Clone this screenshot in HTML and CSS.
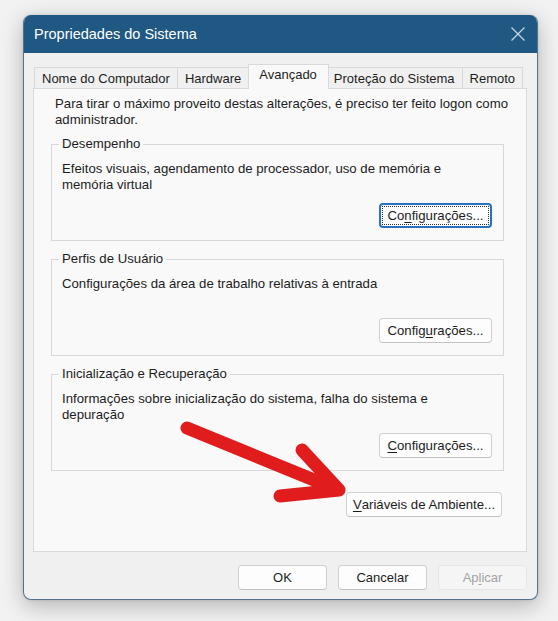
FILE: index.html
```html
<!DOCTYPE html>
<html lang="pt">
<head>
<meta charset="utf-8">
<title>Propriedades do Sistema</title>
<link rel="stylesheet" href="styles.css">
</head>
<body>
<div class="window">
  <div class="titlebar">
    <span class="title">Propriedades do Sistema</span>
    <svg class="close" viewBox="0 0 14 14" aria-hidden="true"><path d="M0.5 0.5L13.5 13.5M13.5 0.5L0.5 13.5"/></svg>
  </div>
  <div class="client">
    <div class="tabs">
      <div class="tab">Nome do Computador</div>
      <div class="tab">Hardware</div>
      <div class="tab active">Avançado</div>
      <div class="tab">Proteção do Sistema</div>
      <div class="tab">Remoto</div>
    </div>
    <div class="panel">
      <p class="intro">Para tirar o máximo proveito destas alterações, é preciso ter feito logon como<br>administrador.</p>
      <fieldset class="group">
        <legend>Desempenho</legend>
        <p class="desc">Efeitos visuais, agendamento de processador, uso de memória e<br>memória virtual</p>
        <div class="actions"><button class="btn cfg focused"><span class="focus">Co<u>n</u>figurações...</span></button></div>
      </fieldset>
      <fieldset class="group">
        <legend>Perfis de Usuário</legend>
        <p class="desc">Configurações da área de trabalho relativas à entrada</p>
        <div class="actions"><button class="btn cfg">Config<u>u</u>rações...</button></div>
      </fieldset>
      <fieldset class="group">
        <legend>Inicialização e Recuperação</legend>
        <p class="desc">Informações sobre inicialização do sistema, falha do sistema e<br>depuração</p>
        <div class="actions"><button class="btn cfg"><u>C</u>onfigurações...</button></div>
      </fieldset>
      <div class="env"><button class="btn envbtn"><u>V</u>ariáveis de Ambiente...</button></div>
    </div>
    <div class="footer">
      <button class="btn dlg">OK</button>
      <button class="btn dlg">Cancelar</button>
      <button class="btn dlg disabled">Ap<u>l</u>icar</button>
    </div>
  </div>
</div>
<svg class="annot" viewBox="0 0 558 621" width="558" height="621" aria-hidden="true">
  <g fill="none" stroke="#e11c1c" stroke-width="13" stroke-linecap="round" stroke-linejoin="round">
    <path d="M187 428 L336 489"/>
    <path d="M302 450 L339 490 L280 496"/>
  </g>
</svg>
</body>
</html>
```
FILE: styles.css
```css
* { box-sizing: border-box; }
html, body { margin: 0; }
body {
  position: relative;
  width: 558px;
  height: 621px;
  overflow: hidden;
  background: #f2f2f2;
  font-family: "Liberation Sans", Arial, sans-serif;
  font-size: 13.2px;
  line-height: 16px;
  color: #1c1c1c;
}
.window {
  margin: 15px 0 0 23px;
  width: 515px;
  height: 585px;
  border: 1px solid #56718a;
  border-top: 0;
  border-radius: 8px;
  overflow: hidden;
  background: #f0f0f0;
  box-shadow: 0 6px 22px rgba(0,0,0,0.26), 0 0 3px rgba(0,0,0,0.12);
  display: flex;
  flex-direction: column;
}
.titlebar {
  flex: none;
  height: 38px;
  background: #1f5882;
  display: flex;
  align-items: center;
  justify-content: space-between;
  padding: 0 12px 0 10px;
}
.title { color: #ffffff; font-size: 14.5px; }
.close { width: 14px; height: 14px; stroke: #cdd6de; stroke-width: 1.2; fill: none; }
.client {
  flex: 1;
  display: flex;
  flex-direction: column;
  padding: 11px 10px 9px 9px;
}
.tabs {
  display: flex;
  align-items: flex-end;
  height: 25px;
  margin: 0 0 -1px 1px;
  position: relative;
  z-index: 1;
}
.tab {
  height: 21px;
  margin-bottom: 1px;
  padding: 0 7px;
  border: 1px solid #d9d9d9;
  border-bottom: 0;
  background: #f0f0f0;
  font-size: 13px;
  line-height: 21px;
  white-space: nowrap;
}
.tab + .tab { margin-left: -1px; }
.tab.active {
  height: 25px;
  margin: 0 -2px 0 -1px;
  padding: 0 11px 0 10px;
  background: #f9f9f9;
  line-height: 20px;
  position: relative;
  z-index: 1;
}
.panel {
  flex: none;
  height: 464px;
  border: 1px solid #d9d9d9;
  background: #f9f9f9;
  padding: 7px 22px 0 17px;
}
.intro { margin: 0 0 8px 4px; white-space: nowrap; }
.group {
  margin: 0;
  min-width: 0;
  border: 1px solid #d8d8d8;
  padding: 9px 11px 12px 10px;
}
.group + .group { margin-top: 10px; }
.group legend {
  padding: 0 3px;
  margin-left: -3px;
  line-height: 16px;
}
.desc { margin: 0; min-height: 32px; white-space: nowrap; }
.actions { display: flex; justify-content: flex-end; margin-top: 10px; }
.env { display: flex; justify-content: flex-end; margin: 21px 2px 0 0; }
.btn {
  height: 25px;
  padding: 0;
  display: inline-flex;
  align-items: center;
  justify-content: center;
  font-family: inherit;
  font-size: 13.2px;
  color: #1c1c1c;
  background: #fdfdfd;
  border: 1px solid #d0d0d0;
  border-bottom-color: #c2c2c2;
  border-radius: 4px;
}
.btn u { text-underline-offset: 2px; }
.cfg { width: 113px; }
.envbtn { width: 156px; }
.focused { border: 2px solid #2a72c0; }
.focus {
  width: calc(100% - 2px);
  height: calc(100% - 2px);
  border: 1px dotted #333;
  display: flex;
  align-items: center;
  justify-content: center;
}
.footer {
  display: flex;
  justify-content: flex-end;
  gap: 11px;
  margin-top: 13px;
}
.dlg { width: 89px; font-size: 13px; }
.disabled { color: #a3a3a3; background: #f5f5f5; border-color: #e6e6e6; }
.annot { position: absolute; left: 0; top: 0; pointer-events: none; }
```
